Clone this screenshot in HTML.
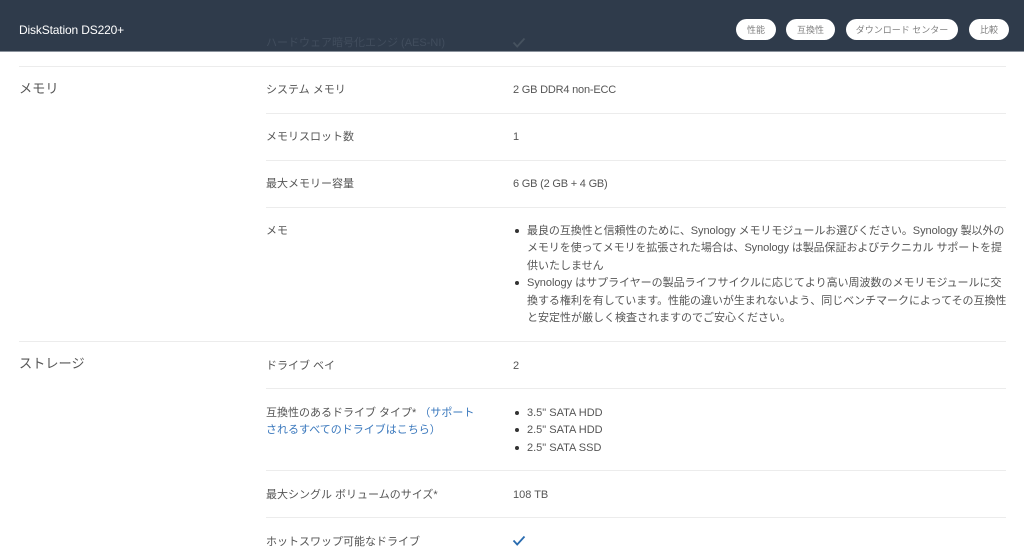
<!DOCTYPE html>
<html lang="ja"><head><meta charset="utf-8"><title>DS220+</title>
<style>
html,body{margin:0;padding:0;background:#fff}
body{width:1024px;height:551px;overflow:hidden;position:relative;font-family:"Liberation Sans","Noto Sans CJK JP",sans-serif;font-size:11px;color:#555}
.t{position:absolute;white-space:nowrap;line-height:18px}
.h{position:absolute;height:1px;background:#ececec}
.s{font-size:13.2px;line-height:20px;color:#555}
.l{letter-spacing:-.2px}
.m{letter-spacing:-.05px}
.hd{position:absolute;left:0;top:0;width:1024px;height:51px;background:#2f3b4b;border-bottom:1px solid #8a929c}
.b{position:absolute;top:19px;height:21px;border-radius:11px;background:#fff;color:#808080;font-size:9px;line-height:22px;text-align:center;white-space:nowrap}
.d{position:absolute;width:4px;height:4px;border-radius:50%;background:#333}
a{color:#3a78bd;text-decoration:none}
svg{position:absolute}
</style></head><body>
<div class="h" style="left:19px;top:66px;width:987px"></div>
<div class="t s" style="left:19px;top:79px">メモリ</div>
<div class="t" style="left:266px;top:81px">システム メモリ</div>
<div class="t l" style="left:513px;top:81px">2 GB DDR4 non-ECC</div>
<div class="h" style="left:266px;top:113px;width:740px"></div>
<div class="t" style="left:266px;top:128px">メモリスロット数</div>
<div class="t" style="left:513px;top:128px">1</div>
<div class="h" style="left:266px;top:160px;width:740px"></div>
<div class="t" style="left:266px;top:175px">最大メモリー容量</div>
<div class="t l" style="left:513px;top:175px">6 GB (2 GB + 4 GB)</div>
<div class="h" style="left:266px;top:207px;width:740px"></div>
<div class="t" style="left:266px;top:222px">メモ</div>
<div class="d" style="left:515px;top:229px"></div>
<div class="t" style="left:527px;top:222px;letter-spacing:-.06px">最良の互換性と信頼性のために、Synology メモリモジュールお選びください。Synology 製以外の</div>
<div class="t" style="left:527px;top:239px;letter-spacing:-.1px">メモリを使ってメモリを拡張された場合は、Synology は製品保証およびテクニカル サポートを提</div>
<div class="t" style="left:527px;top:257px">供いたしません</div>
<div class="d" style="left:515px;top:281px"></div>
<div class="t" style="left:527px;top:274px;letter-spacing:-.02px">Synology はサプライヤーの製品ライフサイクルに応じてより高い周波数のメモリモジュールに交</div>
<div class="t" style="left:527px;top:292px;letter-spacing:-.04px">換する権利を有しています。性能の違いが生まれないよう、同じベンチマークによってその互換性</div>
<div class="t" style="left:527px;top:309px">と安定性が厳しく検査されますのでご安心ください。</div>
<div class="h" style="left:19px;top:341px;width:987px"></div>
<div class="t s" style="left:19px;top:354px">ストレージ</div>
<div class="t" style="left:266px;top:357px">ドライブ ベイ</div>
<div class="t" style="left:513px;top:357px">2</div>
<div class="h" style="left:266px;top:388px;width:740px"></div>
<div class="t" style="left:266px;top:404px">互換性のあるドライブ タイプ* <a>（サポート</a></div>
<div class="t" style="left:266px;top:421px"><a>されるすべてのドライブはこちら）</a></div>
<div class="d" style="left:515px;top:411px"></div>
<div class="t" style="left:527px;top:404px">3.5" SATA HDD</div>
<div class="d" style="left:515px;top:428px"></div>
<div class="t" style="left:527px;top:421px">2.5" SATA HDD</div>
<div class="d" style="left:515px;top:446px"></div>
<div class="t" style="left:527px;top:439px">2.5" SATA SSD</div>
<div class="h" style="left:266px;top:470px;width:740px"></div>
<div class="t" style="left:266px;top:486px">最大シングル ボリュームのサイズ*</div>
<div class="t" style="left:513px;top:486px">108 TB</div>
<div class="h" style="left:266px;top:517px;width:740px"></div>
<div class="t" style="left:266px;top:533px">ホットスワップ可能なドライブ</div>
<svg style="left:512px;top:535px" width="14" height="12" viewBox="0 0 14 12"><path d="M1.5 5.5L5.2 9.5L12.5 1.5" fill="none" stroke="#2a6cb0" stroke-width="1.8"/></svg>
<div class="hd"></div>
<div class="t" style="left:266px;top:34px;color:#414d5d">ハードウェア暗号化エンジ (AES-NI)</div>
<svg style="left:512px;top:37px" width="14" height="12" viewBox="0 0 14 12"><path d="M1.5 5.5L5.2 9.5L12.5 1.5" fill="none" stroke="#46525f" stroke-width="1.8"/></svg>
<div class="t" style="left:19px;top:21px;color:#fff;font-size:12px;letter-spacing:-.15px">DiskStation DS220+</div>
<div class="b" style="left:736px;width:40px">性能</div>
<div class="b" style="left:786px;width:49px">互換性</div>
<div class="b" style="left:846px;width:112px">ダウンロード センター</div>
<div class="b" style="left:969px;width:40px">比較</div>
</body></html>
